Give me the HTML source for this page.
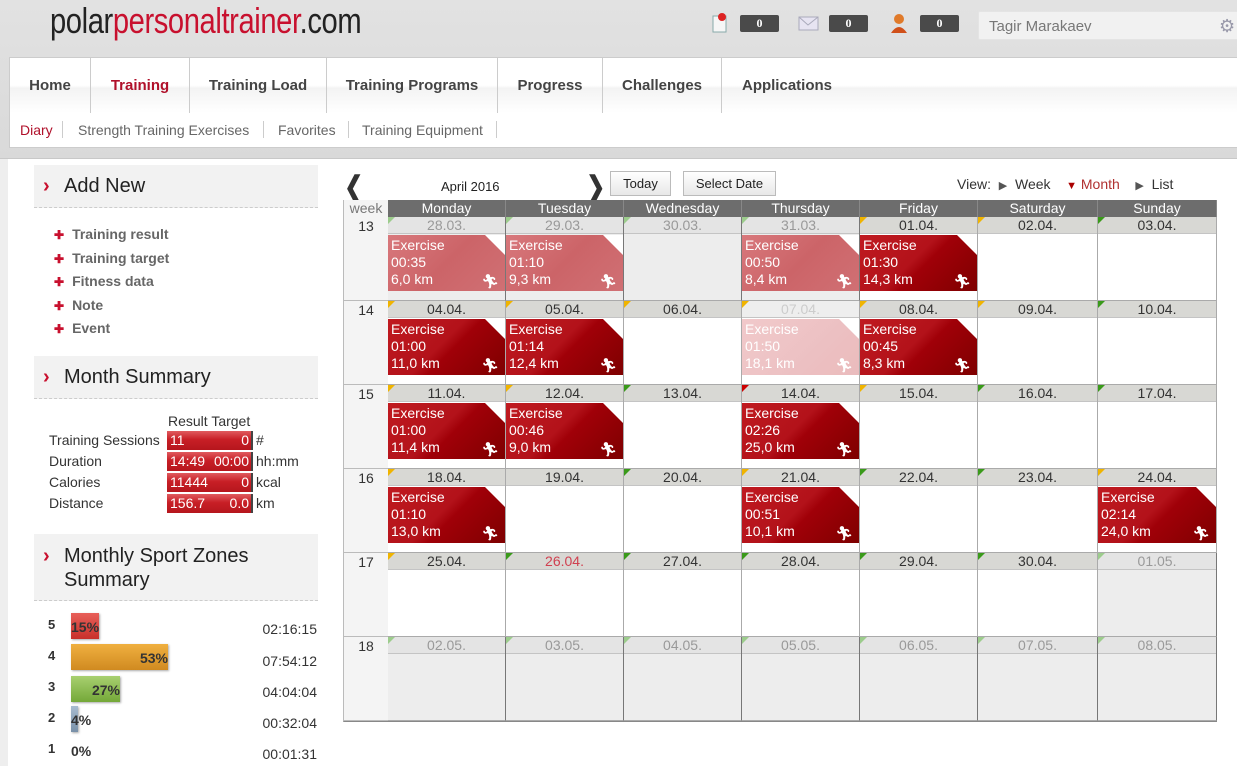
<!DOCTYPE html>
<html><head><meta charset="utf-8"><style>
*{box-sizing:border-box;margin:0;padding:0}
body{width:1237px;height:766px;overflow:hidden;background:#fff;font-family:"Liberation Sans",Arial,sans-serif;position:relative}
.a{position:absolute}
#top{left:0;top:0;width:1237px;height:158px;background:linear-gradient(#e2e2e2,#d9d9d9)}
.logo{left:50px;top:0px;font-size:36px;color:#222;transform:scaleX(.81);transform-origin:0 0;letter-spacing:-0.5px;white-space:nowrap}
.logo b{color:#c8102e;font-weight:normal}
.cnt{width:39px;height:17px;background:#4a4a4a;border-radius:2px;color:#fff;font:bold 12px "Liberation Serif",serif;text-align:center;line-height:17px;top:15px}
#search{left:978px;top:11px;width:262px;height:29px;background:#f1f1f1;border:1px solid #e4e4e4;border-radius:2px;color:#777;font-size:15px;padding:6px 10px}
#nav{left:9px;top:57px;width:1228px;height:57px;background:linear-gradient(#fff 0,#fff 50%,#f3f3f3 55%,#fff 100%);border:1px solid #ccc;border-right:none}
#nav div{position:absolute;top:0;height:55px;line-height:56px;font-weight:bold;font-size:15px;color:#444;text-align:center;border-right:1px solid #ccc}
#sub{left:9px;top:113px;width:1228px;height:35px;background:#fff;border:1px solid #ccc;border-top:none;border-right:none;font-size:14px;color:#666}
#sub span{position:absolute;top:9px}
.sep{position:absolute;top:8px;width:1px;height:17px;background:#ccc}
#main{left:0;top:158px;width:1237px;height:608px;background:#fff;border-top:1px solid #c8c8c8}
#strip{left:0;top:159px;width:8px;height:607px;background:#eee}
.ph{left:34px;width:284px;background:#f2f2f2;border-bottom:1px dashed #ccc;font-size:20px;color:#222;padding-left:30px}
.ph:before{content:"\203A";position:absolute;left:9px;color:#c8102e;font-size:20px;font-weight:bold}
.li{left:54px;font-size:14px;font-weight:bold;color:#666}
.li i{font-style:normal;color:#c8102e;margin-right:8px;font-size:12px}
.lab{left:49px;font-size:14px;color:#333}
.bar{left:167px;width:86px;height:19px;background:linear-gradient(#e05a5e,#c81f26 45%,#b5161d);color:#fff;font-size:14px;line-height:19px;padding:0 2px 0 3px;border-right:2px solid #444}
.bar span{float:right}
.unit{left:256px;font-size:14px;color:#333}
.zn{left:48px;font-size:13px;font-weight:bold;color:#333}
.zb{left:71px;height:26px;font-size:14px;font-weight:bold;color:#333;text-align:right;line-height:28px;box-shadow:1px 1px 2px #aaa}
.zt{left:240px;width:77px;text-align:right;font-size:14px;color:#333}
#cal{left:343px;top:200px;display:grid;grid-template-columns:44px 118px 118px 118px 118px 118px 120px 119px;grid-template-rows:17px repeat(6,84px);border-left:1px solid #bbb;border-bottom:1px solid #888}
.hd{background:#6d6d6d;color:#fff;font-size:14px;text-align:center;line-height:17px;border-right:1px solid #888}
.wk0{background:#f4f4f4;color:#777;font-size:14px;text-align:center;line-height:17px}
.wk{background:#f4f4f4;color:#333;font-size:14px;text-align:center;padding-top:1px;border-bottom:1px solid #bbb}
.c{position:relative;border-right:1px solid #aaa;border-bottom:1px solid #aaa;background:#fff}
.c.g{background:#ededed;border-right-color:#777}
.d{height:17px;background:#d8d8d4;text-align:center;font-size:14px;color:#333;line-height:17px;position:relative;border-bottom:1px solid #c4c4c4}
.g .d,.d.o{background:#e4e4e4;color:#999}
.d:before{content:"";position:absolute;left:0;top:0;border-style:solid;border-width:7px 7px 0 0;border-color:var(--t,transparent) transparent transparent transparent}
.y{--t:#f0b400}.gr{--t:#3a9a1a}.lg{--t:#9ccc8c}.r{--t:#c00}
.e{position:absolute;left:0;right:0;top:18px;height:56px;background:linear-gradient(135deg,#c01a20 0%,#b3121a 45%,#a00008 55%,#7e0000 100%);color:#fff;font-size:14px;line-height:17px;padding:2px 3px}
.e:after{content:"";position:absolute;right:0;top:0;border-style:solid;border-width:0 20px 20px 0;border-color:transparent #fff transparent transparent}
.e.f{background:linear-gradient(135deg,#d8787c,#cc6468 50%,#d07074);}
.e.ff{background:linear-gradient(135deg,#f0c4c6,#e8b4b6);opacity:.9}
.e .rn{position:absolute;right:6px;bottom:1px;font-size:14px}
.btn{top:171px;height:25px;border:1px solid #bbb;background:linear-gradient(#fff,#e8e8e8);font-size:13px;color:#222;text-align:center;line-height:23px}
</style></head><body>
<div id="top" class="a"></div>
<div class="a logo">polar<b>personaltrainer</b>.com</div>
<svg class="a" style="left:711px;top:12px" width="18" height="22"><rect x="2" y="4" width="13" height="16" fill="#f6f6f6" stroke="#8aa" /><circle cx="11" cy="5" r="4" fill="#d22"/></svg>
<div class="a cnt" style="left:740px">0</div>
<svg class="a" style="left:798px;top:14px" width="22" height="18"><rect x="1" y="3" width="19" height="13" fill="#e7e4f2" stroke="#aab"/><path d="M1 3 L10 11 L20 3" fill="none" stroke="#aab"/></svg>
<div class="a cnt" style="left:829px">0</div>
<svg class="a" style="left:889px;top:12px" width="20" height="22"><circle cx="10" cy="7" r="5" fill="#e07a2a"/><path d="M2 21 Q10 9 18 21Z" fill="#d0501a"/></svg>
<div class="a cnt" style="left:920px">0</div>
<div id="search" class="a">Tagir Marakaev</div>
<div class="a" style="left:1219px;top:16px;color:#99a;font-size:18px">⚙</div>
<div id="nav" class="a">
<div style="left:0;width:81px">Home</div>
<div style="left:81px;width:99px;color:#b0102a">Training</div>
<div style="left:180px;width:137px">Training Load</div>
<div style="left:317px;width:171px">Training Programs</div>
<div style="left:488px;width:105px">Progress</div>
<div style="left:593px;width:119px">Challenges</div>
<div style="left:712px;width:130px;border:none">Applications</div>
</div>
<div id="sub" class="a">
<span style="left:10px;color:#b0102a">Diary</span><i class="sep" style="left:52px"></i>
<span style="left:68px">Strength Training Exercises</span><i class="sep" style="left:253px"></i>
<span style="left:268px">Favorites</span><i class="sep" style="left:338px"></i>
<span style="left:352px">Training Equipment</span><i class="sep" style="left:486px"></i>
</div>
<div id="main" class="a"></div>
<div id="strip" class="a"></div>

<div class="a ph" style="top:165px;height:43px;line-height:42px">Add New</div>
<div class="a li" style="top:226px"><i>✚</i>Training result</div>
<div class="a li" style="top:250px"><i>✚</i>Training target</div>
<div class="a li" style="top:273px"><i>✚</i>Fitness data</div>
<div class="a li" style="top:297px"><i>✚</i>Note</div>
<div class="a li" style="top:320px"><i>✚</i>Event</div>
<div class="a ph" style="top:356px;height:43px;line-height:42px">Month Summary</div>
<div class="a" style="left:168px;top:413px;font-size:14px;color:#333">Result Target</div>
<div class="a lab" style="top:432px">Training Sessions</div><div class="a bar" style="top:431px">11<span>0</span></div><div class="a unit" style="top:432px">#</div>
<div class="a lab" style="top:453px">Duration</div><div class="a bar" style="top:452px">14:49<span>00:00</span></div><div class="a unit" style="top:453px">hh:mm</div>
<div class="a lab" style="top:474px">Calories</div><div class="a bar" style="top:473px">11444<span>0</span></div><div class="a unit" style="top:474px">kcal</div>
<div class="a lab" style="top:495px">Distance</div><div class="a bar" style="top:494px">156.7<span>0.0</span></div><div class="a unit" style="top:495px">km</div>
<div class="a ph" style="top:534px;height:67px;line-height:24px;padding-top:10px">Monthly Sport Zones<br>Summary</div>
<div class="a zn" style="top:617px">5</div><div class="a zb" style="top:613px;width:28px;background:linear-gradient(#e8605a,#c8302a)">15%</div><div class="a zt" style="top:621px">02:16:15</div>
<div class="a zn" style="top:648px">4</div><div class="a zb" style="top:644px;width:97px;background:linear-gradient(#f0b040,#d08a20)">53%</div><div class="a zt" style="top:653px">07:54:12</div>
<div class="a zn" style="top:679px">3</div><div class="a zb" style="top:676px;width:49px;background:linear-gradient(#a8d070,#74a838)">27%</div><div class="a zt" style="top:684px">04:04:04</div>
<div class="a zn" style="top:710px">2</div><div class="a zb" style="top:706px;width:7px;background:linear-gradient(#a8bcd0,#7890a8);overflow:visible;text-align:left">4%</div><div class="a zt" style="top:715px">00:32:04</div>
<div class="a zn" style="top:741px">1</div><div class="a" style="left:71px;top:743px;font-size:14px;font-weight:bold;color:#333">0%</div><div class="a zt" style="top:746px">00:01:31</div>

<div class="a" style="left:342px;top:170px;font-size:28px;font-weight:bold;color:#333;transform:scaleX(.8)">❮</div>
<div class="a" style="left:441px;top:179px;font-size:13px;color:#222">April 2016</div>
<div class="a" style="left:584px;top:170px;font-size:28px;font-weight:bold;color:#333;transform:scaleX(.8)">❯</div>
<div class="a btn" style="left:610px;width:61px">Today</div>
<div class="a btn" style="left:683px;width:93px">Select Date</div>
<div class="a" style="left:957px;top:176px;font-size:14px;color:#333;white-space:nowrap">View: &nbsp;<span style="color:#555;font-size:11px">▶</span>&nbsp; Week &nbsp;&nbsp;&nbsp;<span style="color:#a00;font-size:11px">▼</span> <span style="color:#b03030">Month</span> &nbsp;&nbsp;&nbsp;<span style="color:#555;font-size:11px">▶</span>&nbsp; List</div>

<div id="cal" class="a">
<div class="wk0">week</div><div class="hd">Monday</div><div class="hd">Tuesday</div><div class="hd">Wednesday</div><div class="hd">Thursday</div><div class="hd">Friday</div><div class="hd">Saturday</div><div class="hd">Sunday</div>

<div class="wk">13</div>
<div class="c g"><div class="d lg">28.03.</div><div class="e f">Exercise<br>00:35<br>6,0 km<span class="rn">🏃︎</span></div></div>
<div class="c g"><div class="d lg">29.03.</div><div class="e f">Exercise<br>01:10<br>9,3 km<span class="rn">🏃︎</span></div></div>
<div class="c g"><div class="d lg">30.03.</div></div>
<div class="c g"><div class="d lg">31.03.</div><div class="e f">Exercise<br>00:50<br>8,4 km<span class="rn">🏃︎</span></div></div>
<div class="c"><div class="d y">01.04.</div><div class="e">Exercise<br>01:30<br>14,3 km<span class="rn">🏃︎</span></div></div>
<div class="c"><div class="d y">02.04.</div></div>
<div class="c"><div class="d gr">03.04.</div></div>

<div class="wk">14</div>
<div class="c"><div class="d y">04.04.</div><div class="e">Exercise<br>01:00<br>11,0 km<span class="rn">🏃︎</span></div></div>
<div class="c"><div class="d y">05.04.</div><div class="e">Exercise<br>01:14<br>12,4 km<span class="rn">🏃︎</span></div></div>
<div class="c"><div class="d y">06.04.</div></div>
<div class="c"><div class="d o y" style="background:#eee;color:#ccc">07.04.</div><div class="e ff">Exercise<br>01:50<br>18,1 km<span class="rn">🏃︎</span></div></div>
<div class="c"><div class="d y">08.04.</div><div class="e">Exercise<br>00:45<br>8,3 km<span class="rn">🏃︎</span></div></div>
<div class="c"><div class="d y">09.04.</div></div>
<div class="c"><div class="d gr">10.04.</div></div>

<div class="wk">15</div>
<div class="c"><div class="d y">11.04.</div><div class="e">Exercise<br>01:00<br>11,4 km<span class="rn">🏃︎</span></div></div>
<div class="c"><div class="d y">12.04.</div><div class="e">Exercise<br>00:46<br>9,0 km<span class="rn">🏃︎</span></div></div>
<div class="c"><div class="d gr">13.04.</div></div>
<div class="c"><div class="d r">14.04.</div><div class="e">Exercise<br>02:26<br>25,0 km<span class="rn">🏃︎</span></div></div>
<div class="c"><div class="d y">15.04.</div></div>
<div class="c"><div class="d gr">16.04.</div></div>
<div class="c"><div class="d gr">17.04.</div></div>

<div class="wk">16</div>
<div class="c"><div class="d y">18.04.</div><div class="e">Exercise<br>01:10<br>13,0 km<span class="rn">🏃︎</span></div></div>
<div class="c"><div class="d">19.04.</div></div>
<div class="c"><div class="d gr">20.04.</div></div>
<div class="c"><div class="d y">21.04.</div><div class="e">Exercise<br>00:51<br>10,1 km<span class="rn">🏃︎</span></div></div>
<div class="c"><div class="d gr">22.04.</div></div>
<div class="c"><div class="d gr">23.04.</div></div>
<div class="c"><div class="d y">24.04.</div><div class="e">Exercise<br>02:14<br>24,0 km<span class="rn">🏃︎</span></div></div>

<div class="wk">17</div>
<div class="c"><div class="d y">25.04.</div></div>
<div class="c"><div class="d gr" style="color:#d04050">26.04.</div></div>
<div class="c"><div class="d gr">27.04.</div></div>
<div class="c"><div class="d gr">28.04.</div></div>
<div class="c"><div class="d gr">29.04.</div></div>
<div class="c"><div class="d gr">30.04.</div></div>
<div class="c g"><div class="d lg">01.05.</div></div>

<div class="wk">18</div>
<div class="c g"><div class="d lg">02.05.</div></div>
<div class="c g"><div class="d lg">03.05.</div></div>
<div class="c g"><div class="d lg">04.05.</div></div>
<div class="c g"><div class="d lg">05.05.</div></div>
<div class="c g"><div class="d lg">06.05.</div></div>
<div class="c g"><div class="d lg">07.05.</div></div>
<div class="c g"><div class="d lg">08.05.</div></div>
</div>
</body></html>
